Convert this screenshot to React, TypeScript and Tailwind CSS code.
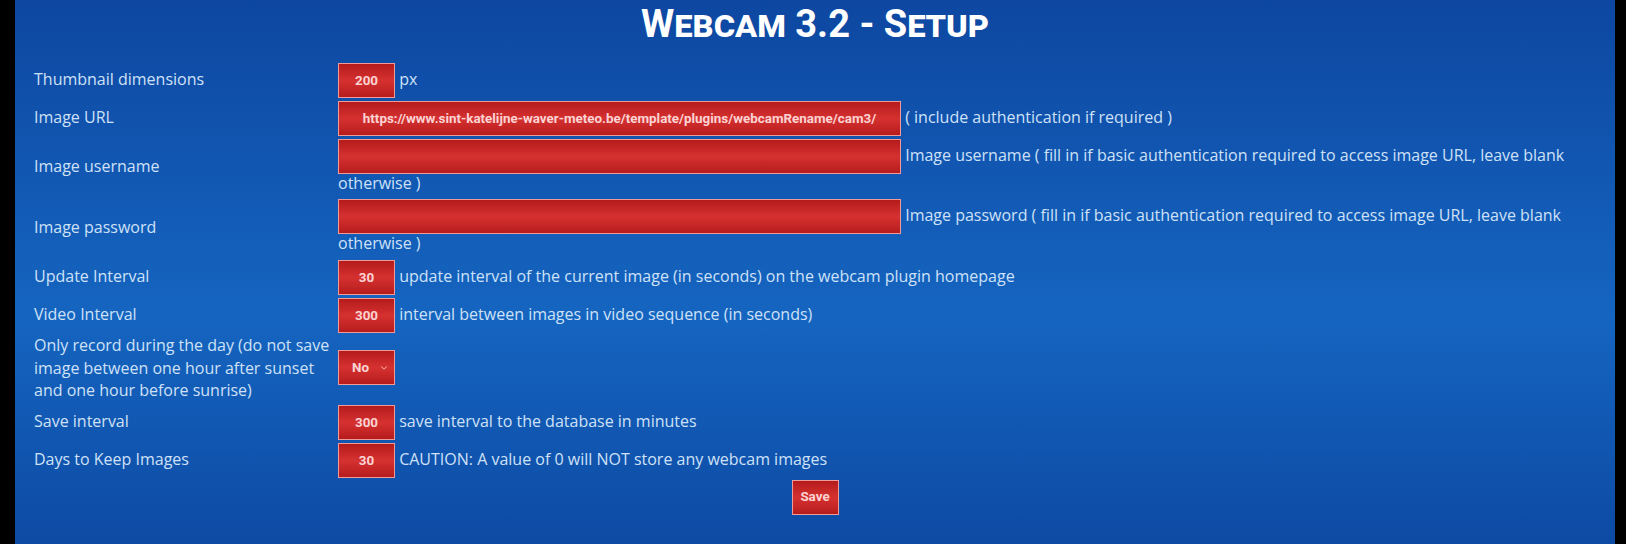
import { ChevronDown } from "lucide-react";

const labelFont = "font-['Open_Sans',sans-serif]";

const inputCls =
  "h-[35px] border border-[#f09a9a] bg-[linear-gradient(to_bottom,#b51b1b_0%,#d63131_50%,#b61c1c_100%)] text-center font-['Roboto',sans-serif] text-[13.4px] font-bold text-[#fbd3d3] outline-none";

interface RowProps {
  label: string;
  children: React.ReactNode;
}

function Row({ label, children }: RowProps) {
  return (
    <>
      <div className="flex items-center py-[2.5px] pr-2">{label}</div>
      <div className="py-[2.5px]">{children}</div>
    </>
  );
}

function Field({ value, wide }: { value: string; wide?: boolean }) {
  return (
    <input
      readOnly
      value={value}
      className={`${inputCls} mb-[-2px] align-baseline ${wide ? "w-[563px]" : "w-[57px]"}`}
    />
  );
}

export default function App() {
  return (
    <div className="flex h-[544px] w-[1626px] bg-black">
      <div className="ml-[15px] h-full w-[1600px] bg-[linear-gradient(to_bottom,#0d47a1_0%,#1565c0_58%,#0d4aa4_100%)] pl-[19px] pr-[19px]">
        <h1 className="flex h-[60px] items-start justify-center pt-[1px] font-['Roboto',sans-serif] text-[38px] font-bold leading-[46px] text-white [font-stretch:90%] [font-variant:small-caps]">
          Webcam 3.2 - Setup
        </h1>

        <div className={`grid grid-cols-[304px_1fr] text-[16px] leading-[22.5px] text-[#cfe1f7] ${labelFont}`}>
          <Row label="Thumbnail dimensions">
            <Field value="200" /> px
          </Row>
          <Row label="Image URL">
            <Field value="https://www.sint-katelijne-waver-meteo.be/template/plugins/webcamRename/cam3/" wide /> ( include
            authentication if required )
          </Row>
          <Row label="Image username">
            <Field value="" wide /> Image username ( fill in if basic authentication required to access image URL, leave
            blank otherwise )
          </Row>
          <Row label="Image password">
            <Field value="" wide /> Image password ( fill in if basic authentication required to access image URL, leave
            blank otherwise )
          </Row>
          <Row label="Update Interval">
            <Field value="30" /> update interval of the current image (in seconds) on the webcam plugin homepage
          </Row>
          <Row label="Video Interval">
            <Field value="300" /> interval between images in video sequence (in seconds)
          </Row>
          <div className="flex items-center py-[1px]">
            Only record during the day (do not save image between one hour after sunset and one hour before sunrise)
          </div>
          <div className="flex items-center py-[1px]">
            <div className="relative">
              <select
                defaultValue="no"
                className={`${inputCls} block w-[57px] appearance-none pr-[14px] pl-[2px] text-center`}
              >
                <option value="no">No</option>
                <option value="yes">Yes</option>
              </select>
              <ChevronDown className="pointer-events-none absolute top-[13px] right-[6px] size-[10px] text-[#fbd3d3]" strokeWidth={2} />
            </div>
          </div>
          <Row label="Save interval">
            <Field value="300" /> save interval to the database in minutes
          </Row>
          <Row label="Days to Keep Images">
            <Field value="30" /> CAUTION: A value of 0 will NOT store any webcam images
          </Row>
        </div>

        <div className="flex justify-center pt-[1px]">
          <button className={`${inputCls} h-[34px] w-[47px]`}>Save</button>
        </div>
      </div>
    </div>
  );
}
